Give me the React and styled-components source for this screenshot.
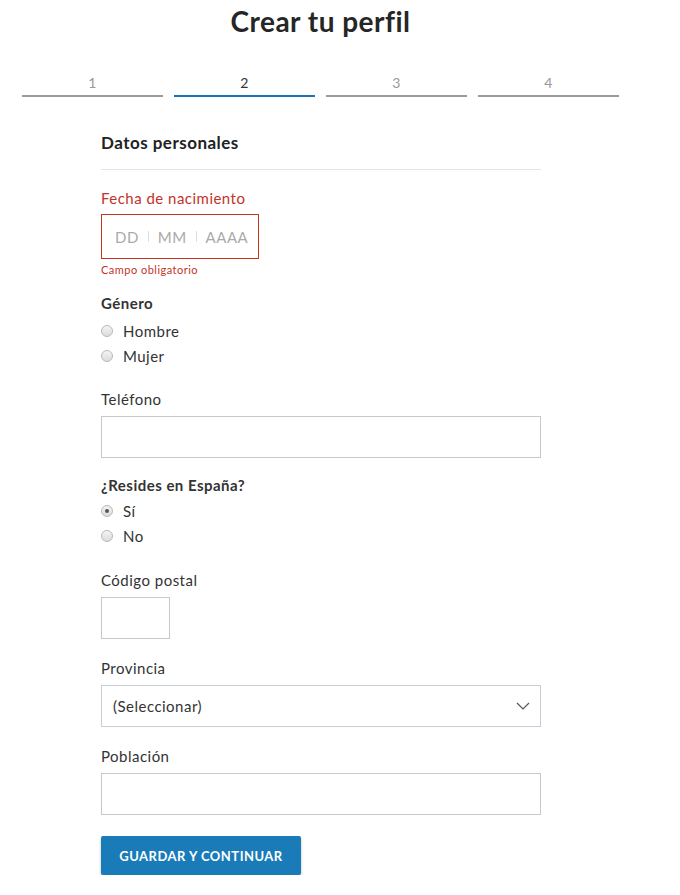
import React from 'react'
import styled, { createGlobalStyle } from 'styled-components'

const GlobalStyle = createGlobalStyle`
  * { box-sizing: border-box; }
  body {
    margin: 0;
    background: #fff;
    font-family: Lato, "Open Sans", sans-serif;
    letter-spacing: 0.03em;
    color: #333;
  }
`

const Page = styled.div`
  width: 641px;
  padding-top: 4px;
`

const Title = styled.h1`
  margin: 0;
  text-align: center;
  font-size: 28px;
  line-height: 34px;
  font-weight: 700;
  color: #262626;
`

const Stepper = styled.div`
  display: grid;
  grid-template-columns: repeat(4, 1fr);
  gap: 11px;
  padding: 0 22px;
  margin-top: 36px;
`

const Step = styled.div`
  text-align: center;
  font-size: 14px;
  line-height: 18px;
  color: ${p => (p.$active ? '#333' : '#999')};
  padding-bottom: 3px;
  border-bottom: 2px solid ${p => (p.$active ? '#1a73b8' : '#9a9a9a')};
`

const Form = styled.form`
  width: 440px;
  margin: 35px 0 0 101px;
  display: flex;
  flex-direction: column;
`

const Section = styled.h2`
  margin: 0;
  font-size: 17px;
  line-height: 22px;
  font-weight: 700;
  color: #222;
  padding-bottom: 15px;
  border-bottom: 1px solid #e4e4e4;
`

const Label = styled.div`
  font-size: 15px;
  line-height: 20px;
  color: ${p => (p.$error ? '#c3322a' : '#333')};
  font-weight: ${p => (p.$bold ? 700 : 400)};
  margin-top: ${p => p.$top || 0}px;
  margin-bottom: ${p => p.$bottom ?? 7}px;
`

const DateBox = styled.div`
  width: 158px;
  height: 45px;
  border: 1px solid #c8351f;
  display: flex;
  align-items: center;
  padding-left: 13px;
  font-size: 15px;
  color: #aaa;
  gap: 9px;
`

const Sep = styled.span`
  width: 1px;
  height: 11px;
  background: #ddd;
`

const ErrorText = styled.div`
  font-size: 11px;
  line-height: 14px;
  color: #c3322a;
  margin-top: 4px;
`

const RadioRow = styled.label`
  display: flex;
  align-items: center;
  height: 25px;
  font-size: 15px;
  color: #333;
`

const Radio = styled.span`
  width: 12px;
  height: 12px;
  border-radius: 50%;
  border: 1px solid #b9b9b9;
  background: linear-gradient(#f4f4f4, #dcdcdc);
  margin-right: 10px;
  display: flex;
  align-items: center;
  justify-content: center;
  &::after {
    content: '';
    width: 4px;
    height: 4px;
    border-radius: 50%;
    background: ${p => (p.$checked ? '#555' : 'transparent')};
  }
`

const Input = styled.div`
  width: ${p => p.$width || 440}px;
  height: 42px;
  border: 1px solid #c9c9c9;
  background: #fff;
`

const Select = styled.div`
  width: 440px;
  height: 42px;
  border: 1px solid #c5ced6;
  display: flex;
  align-items: center;
  justify-content: space-between;
  padding: 0 10px 0 11px;
  font-size: 15px;
  color: #333;
`

const Button = styled.button`
  margin-top: 21px;
  width: 200px;
  height: 39px;
  border: none;
  border-radius: 2px;
  background: #1a7bb9;
  color: #fff;
  font-family: inherit;
  letter-spacing: inherit;
  font-size: 13px;
  font-weight: 700;
  text-transform: uppercase;
  box-shadow: 0 2px 3px rgba(0, 0, 0, 0.25);
  cursor: pointer;
`

const Chevron = () => (
  <svg width="14" height="8" viewBox="0 0 14 8" fill="none">
    <path d="M1 1l6 6 6-6" stroke="#555" strokeWidth="1.2" />
  </svg>
)

const App = () => {
  const steps = [1, 2, 3, 4]
  return (
    <Page>
      <GlobalStyle />
      <Title>Crear tu perfil</Title>
      <Stepper>
        {steps.map(s => (
          <Step key={s} $active={s === 2}>{s}</Step>
        ))}
      </Stepper>
      <Form>
        <Section>Datos personales</Section>

        <Label $error $top={18} $bottom={6}>Fecha de nacimiento</Label>
        <DateBox>
          <span>DD</span>
          <Sep />
          <span>MM</span>
          <Sep />
          <span>AAAA</span>
        </DateBox>
        <ErrorText>Campo obligatorio</ErrorText>

        <Label $bold $top={16} $bottom={5}>Género</Label>
        <RadioRow><Radio />Hombre</RadioRow>
        <RadioRow><Radio />Mujer</RadioRow>

        <Label $top={21}>Teléfono</Label>
        <Input />

        <Label $bold $top={17} $bottom={3}>¿Resides en España?</Label>
        <RadioRow><Radio $checked />Sí</RadioRow>
        <RadioRow><Radio />No</RadioRow>

        <Label $top={22}>Código postal</Label>
        <Input $width={69} />

        <Label $top={19}>Provincia</Label>
        <Select>
          <span>(Seleccionar)</span>
          <Chevron />
        </Select>

        <Label $top={19}>Población</Label>
        <Input />

        <Button type="button">Guardar y continuar</Button>
      </Form>
    </Page>
  )
}

export default App
